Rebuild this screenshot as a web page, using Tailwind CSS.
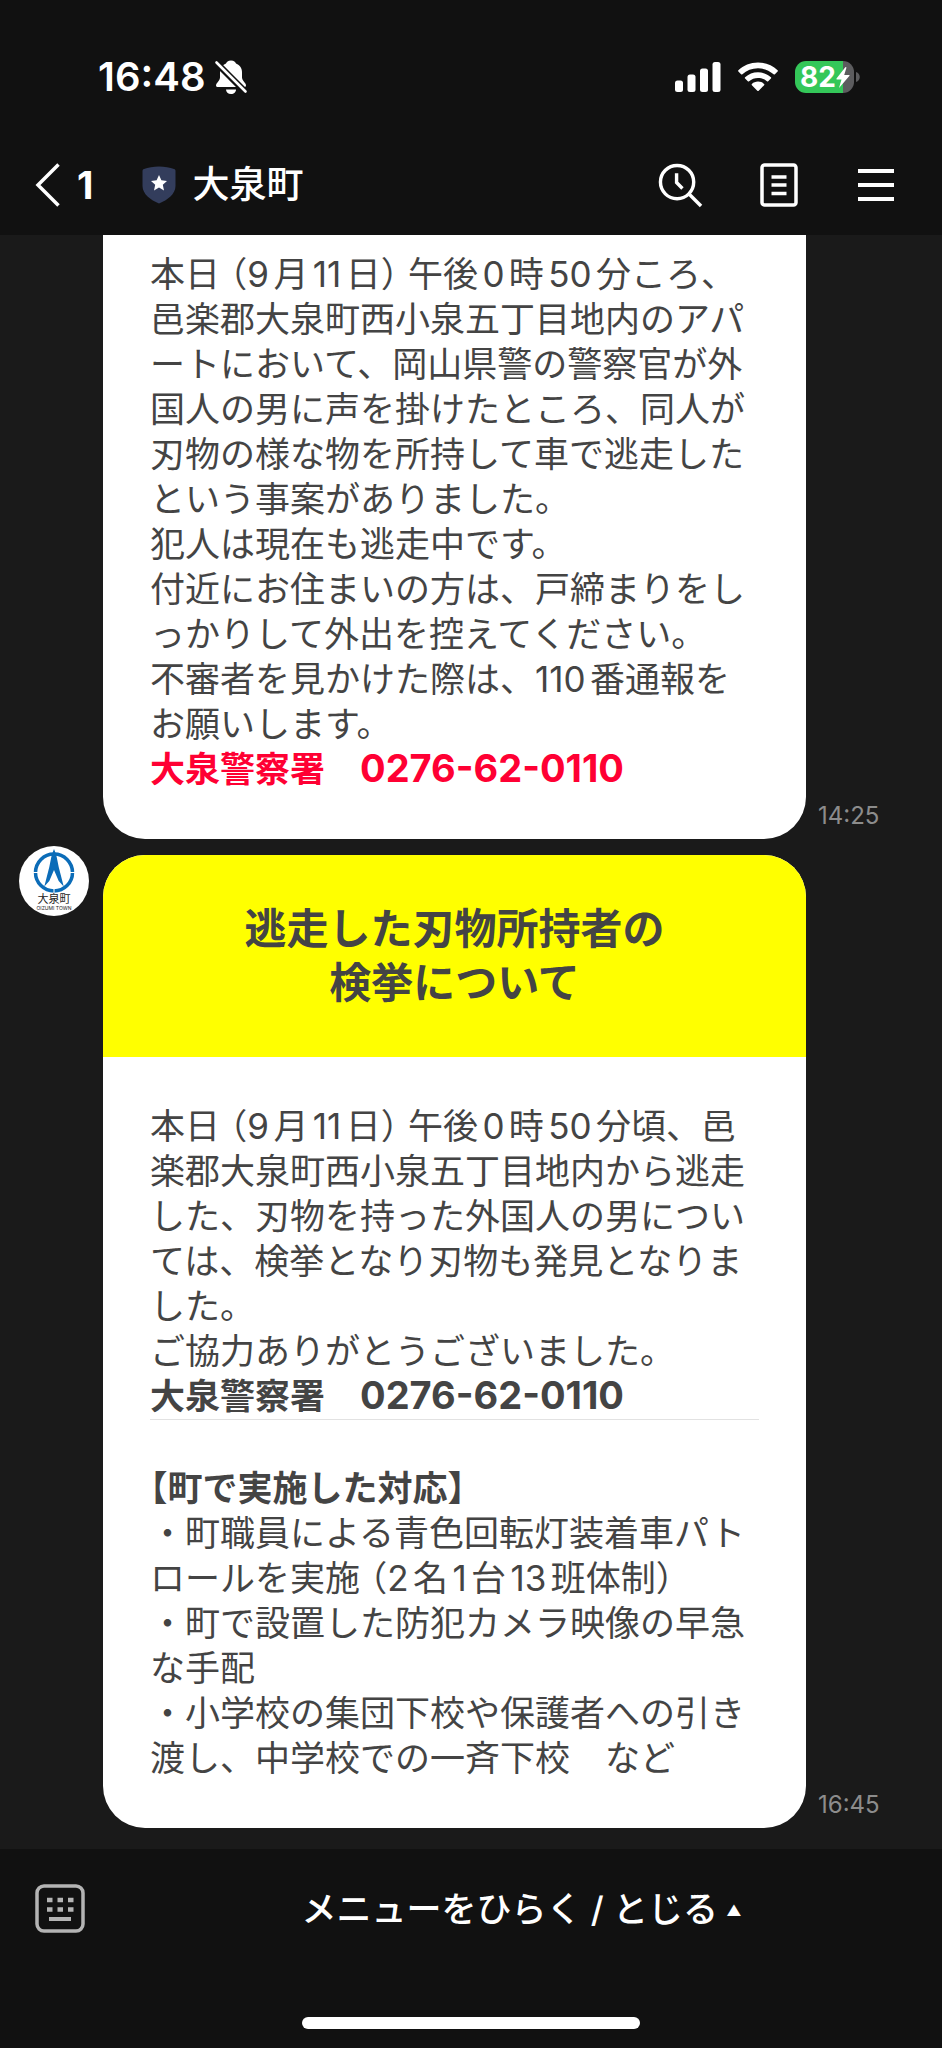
<!DOCTYPE html>
<html lang="ja">
<head>
  <meta charset="UTF-8" />
  <meta name="viewport" content="width=device-width, initial-scale=1.0" />
  <title>大泉町</title>
  <script src="https://cdn.jsdelivr.net/npm/@tailwindcss/browser@4"></script>
  <style>
    body { font-family: Inter, 'Noto Sans CJK JP', sans-serif; text-autospace: normal; text-spacing-trim: trim-start; }
  </style>
</head>
<body class="min-h-screen flex flex-col bg-[#1a1a1a] text-white">

  <!-- Header -->
  <header class="bg-[#111111] h-[235px] flex flex-col">
    <!-- Status bar -->
    <div class="flex items-center justify-between pt-[52px] pl-[98px] pr-[82px]">
      <div class="flex items-center gap-2">
        <span class="text-[40px] leading-[50px] font-semibold">16:48</span>
        <svg class="w-[34px] h-[36px]" viewBox="0 0 34 36" fill="currentColor">
          <path d="M17 1.500c-3 0-4.500 1.500-5 3-4 1.500-6 5-6 9v5c0 3-4 5.500-4 8 0 1.200 1 1.500 2 1.500h26c1 0 2-.3 2-1.500 0-2.500-4-5-4-8v-5c0-4-2-7.500-6-9-.5-1.500-2-3-5-3z" />
          <path d="M12 30.500h10c0 2.500-2 4.500-5 4.500s-5-2-5-4.500z" />
          <path d="M2 3.500 L32 33.500" stroke="#111111" stroke-width="6.500" />
          <path d="M2.500 3.500 L31.500 32.500" stroke="currentColor" stroke-width="2.600" stroke-linecap="round" />
        </svg>
      </div>
      <div class="flex items-center">
        <svg class="w-[46px] h-[30px]" viewBox="0 0 46 30" fill="currentColor">
          <rect x="0" y="18.500" width="8" height="11.500" rx="2.500" />
          <rect x="12.500" y="12.500" width="8" height="17.500" rx="2.500" />
          <rect x="25" y="6.500" width="8" height="23.500" rx="2.500" />
          <rect x="37.500" y="0" width="8" height="30" rx="2.500" />
        </svg>
        <svg class="w-10 h-[30px] ml-[17px]" viewBox="0 0 40 30" fill="currentColor">
          <path d="M20 .5C12.300.5 5.400 3.500.4 8.300c-.4.4-.4.9 0 1.300l2.700 2.700c.4.4.9.4 1.300 0C8.500 8.500 14 6.300 20 6.300s11.500 2.200 15.600 6c.4.4.9.4 1.300 0l2.700-2.700c.4-.4.4-.9 0-1.300C34.600 3.500 27.700.5 20 .5z" />
          <path d="M20 10.300c-5 0-9.500 1.900-12.900 5-.4.4-.4.9 0 1.300l2.700 2.700c.4.4.9.400 1.300 0 2.400-2.100 5.500-3.300 8.900-3.300s6.500 1.200 8.900 3.300c.4.400.9.400 1.300 0l2.700-2.700c.4-.4.400-.9 0-1.300-3.400-3.100-7.900-5-12.900-5z" />
          <path d="M20 19.600c-2.400 0-4.500.9-6.100 2.300-.4.4-.4.900 0 1.300l5.400 5.600c.4.4 1 .4 1.400 0l5.400-5.600c.4-.4.400-.9 0-1.300-1.600-1.400-3.700-2.300-6.100-2.300z" />
        </svg>
        <div class="relative ml-[17px] w-[59px] h-8 rounded-[11px] bg-linear-to-r from-[#34c759] from-82% to-[#5c5c5e] to-82%">
          <span class="absolute left-[5px] top-0 text-[28px] leading-8 font-bold">82</span>
          <svg class="absolute left-[41px] top-[6px] w-[14px] h-[21px]" viewBox="0 0 14 21" fill="currentColor">
            <path d="M9.500 0 L.5 11.500 Q0 12.500 1 12.500 H5.500 L3 21 L13.500 8.800 Q14 8 13 8 H8.200 L10.500.5z" />
          </svg>
        </div>
        <svg class="w-1 h-[10px] ml-[2px]" viewBox="0 0 4 10" fill="#5c5c5e"><path d="M0 0c5 1.500 5 8.500 0 10z" /></svg>
      </div>
    </div>

    <!-- Navigation -->
    <nav class="flex items-center pt-[53px] pl-[35px] pr-12">
      <a href="#" class="flex items-center gap-4" aria-label="戻る">
        <svg class="w-[26px] h-[44px]" viewBox="0 0 26 44" fill="none" stroke="currentColor" stroke-width="3.500">
          <path d="M23.500 1.500 L3 22 L23.500 42.500" />
        </svg>
        <span class="text-[38px] leading-[60px] font-bold">1</span>
      </a>
      <svg class="w-[34px] h-[38px] ml-[49px]" viewBox="0 0 34 38">
        <path d="M17 .5c5.500 0 11 1 15 2.500 1 .4 1.500 1 1.500 2V20c0 8-8 14-16.500 17.500C8.500 34 .5 28 .5 20V5c0-1 .5-1.600 1.500-2C6 1.500 11.500.5 17 .5z" fill="#333d5c" />
        <path d="M17 9l2.400 5.300 5.600.6-4.200 3.900 1.200 5.700-5-2.900-5 2.900 1.200-5.700L9 14.900l5.600-.6z" fill="#fff" />
      </svg>
      <h1 class="ml-4 text-[37px] leading-[60px] font-medium">大泉町</h1>
      <div class="ml-auto flex items-center">
        <button aria-label="検索">
          <svg class="w-[45px] h-[45px]" viewBox="0 0 46 46" fill="none" stroke="currentColor" stroke-width="3.500">
            <circle cx="19.500" cy="19.500" r="17" />
            <path d="M19 10.500v9.500l6 6" />
            <path d="M31.500 31.500 L44 44" />
          </svg>
        </button>
        <button aria-label="ノート" class="ml-[57px]">
          <svg class="w-[38px] h-[44px]" viewBox="0 0 38 44" fill="none" stroke="currentColor" stroke-width="3.500">
            <rect x="2" y="2" width="34" height="40" rx="2.500" />
            <path d="M11.500 14h15M11.500 22h15M11.500 30.500h15" />
          </svg>
        </button>
        <button aria-label="メニュー" class="ml-[60px]">
          <svg class="w-9 h-[34px]" viewBox="0 0 36 34" fill="none" stroke="currentColor" stroke-width="4">
            <path d="M0 3h36M0 17h36M0 31h36" />
          </svg>
        </button>
      </div>
    </nav>
  </header>

  <!-- Messages -->
  <main class="flex flex-col gap-4 pl-[19px] pb-[21px] text-[35px] leading-[45px] text-[#444444]">
    <article class="flex items-end">
      <div class="ml-[84px] flex-1 bg-white rounded-b-[42px] px-[47px] pt-[17px] pb-[47px] [line-break:anywhere]">
        <p>本日 <span class="[font-feature-settings:'halt']">（9月11日）</span> 午後0時50分ころ、<br />邑楽郡大泉町西小泉五丁目地内のアパートにおいて、岡山県警の警察官が外国人の男に声を掛けたところ、同人が刃物の様な物を所持して車で逃走したという事案がありました。</p>
        <p>犯人は現在も逃走中です。</p>
        <p>付近にお住まいの方は、戸締まりをしっかりして外出を控えてください。</p>
        <p>不審者を見かけた際は、110番通報をお願いします。</p>
        <p class="font-bold text-[#ff0033]">大泉警察署　<span class="text-[38px] leading-none">0276-62-0110</span></p>
      </div>
      <time class="w-[124px] ml-3 mb-[7px] text-2xl leading-8 text-[#8c8c8c]">14:25</time>
    </article>

    <article class="flex items-end">
      <!-- Town emblem -->
      <svg class="w-[70px] h-[70px] mr-[14px] -mt-[9px] self-start shrink-0" viewBox="0 0 70 70" role="img" aria-label="大泉町">
        <circle cx="35" cy="35" r="35" fill="#fff" />
        <circle cx="35" cy="26.500" r="18.500" fill="none" stroke="#0b6cb8" stroke-width="3.500" />
        <path d="M14 26.500h5M51 26.500h5M35 43v5" stroke="#fff" stroke-width="1" />
        <path d="M35 3l1.200 3 1.500 5 2 10 5 19.500-5-5.500L35 24l-4.700 11-5 5.500 5-19.500 2-10 1.500-5z" fill="#0b6cb8" />
        <text x="35" y="57" text-anchor="middle" font-size="11" fill="#222">大泉町</text>
        <text x="35" y="64" text-anchor="middle" font-size="5" fill="#222">OIZUMI TOWN</text>
      </svg>
      <div class="flex-1 bg-white rounded-[42px] overflow-hidden [line-break:anywhere]">
        <h2 class="bg-[#ffff00] p-[47px] text-center text-[42px] leading-[54px] font-bold">逃走した刃物所持者の<br />検挙について</h2>
        <div class="p-[47px]">
          <p>本日 <span class="[font-feature-settings:'halt']">（9月11日）</span> 午後0時50分頃、邑<br />楽郡大泉町西小泉五丁目地内から逃走した、刃物を持った外国人の男については、検挙となり刃物も発見となりました。</p>
          <p>ご協力ありがとうございました。</p>
          <p class="font-bold">大泉警察署　<span class="text-[38px] leading-none">0276-62-0110</span></p>
          <hr class="border-[#e2e2e2] mb-[46px]" />
          <h3 class="font-bold">【町で実施した対応】</h3>
          <p>・町職員による青色回転灯装着車パト<br />ロールを実施 <span class="[font-feature-settings:'halt']">（2名1台13班体制）</span></p>
          <p>・町で設置した防犯カメラ映像の早急な手配</p>
          <p>・小学校の集団下校や保護者への引き渡し、中学校での一斉下校　など</p>
        </div>
      </div>
      <time class="w-[124px] ml-3 mb-[7px] text-2xl leading-8 text-[#8c8c8c]">16:45</time>
    </article>
  </main>

  <!-- Bottom menu bar -->
  <footer class="flex-1 bg-[#111111] flex flex-col">
    <div class="flex items-center pt-[28px] pl-[35px]">
      <button aria-label="キーボード">
        <svg class="w-[50px] h-[50px]" viewBox="0 0 50 50" fill="none" stroke="#b4b4b4">
          <rect x="2" y="2" width="46" height="45" rx="7" stroke-width="3.500" />
          <path d="M12 16h5.500M22.500 16h5.500M33 16h5.500M12 25.500h5.500M22.500 25.500h5.500M33 25.500h5.500" stroke-width="4.500" />
          <path d="M14 35h22" stroke-width="4" />
        </svg>
      </button>
      <button class="flex-1 flex items-center justify-center gap-2 pl-4 text-[35px] leading-[60px] font-medium">メニューをひらく / とじる<span class="pt-1 text-[15px]">▲</span></button>
    </div>
    <div class="mt-auto mb-[19px] mx-auto w-[338px] h-3 rounded-full bg-white"></div>
  </footer>

</body>
</html>
